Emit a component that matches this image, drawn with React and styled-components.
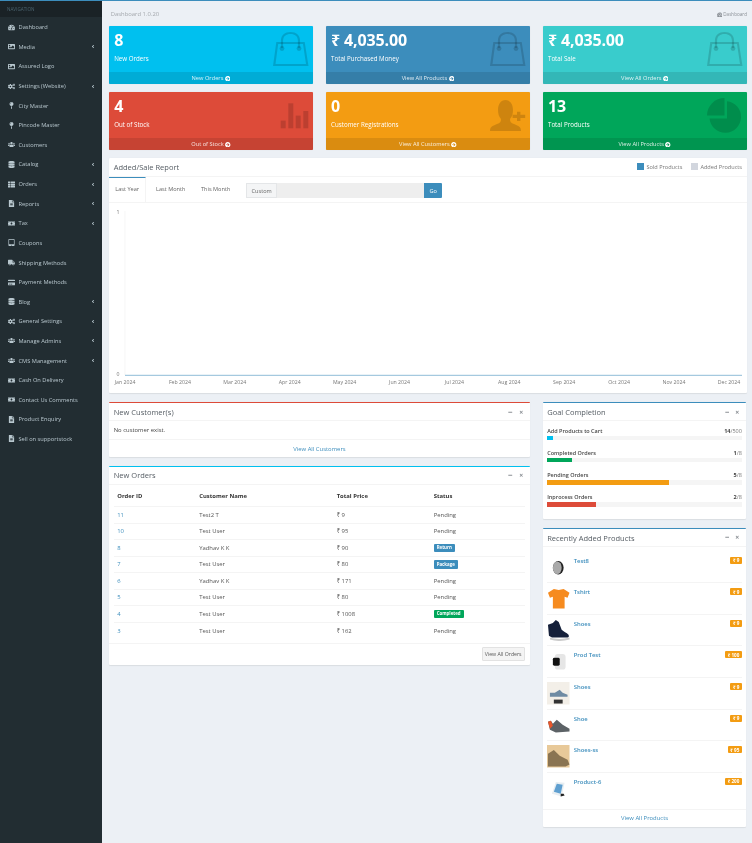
import React from 'react';
import styled, { createGlobalStyle } from 'styled-components';
import {
  FaTachometerAlt, FaImage, FaCogs, FaMapPin, FaUsers, FaDatabase, FaThList, FaFileAlt, FaMoneyBill,
  FaTabletAlt, FaTruck, FaCreditCard, FaAngleLeft, FaArrowCircleRight, FaMinus, FaTimes,
} from 'react-icons/fa';

const Global = createGlobalStyle`
  html, body { margin: 0; padding: 0; background: #ecf0f5; }
  body { font-family: "Open Sans", "Noto Sans", "DejaVu Sans", sans-serif; color: #333; }
  * { box-sizing: border-box; }
`;

const Page = styled.div`
  width: 752px; height: 843px; display: flex; overflow: hidden;
  border-top: 1.5px solid #3c8dbc; background: #ecf0f5; filter: blur(.3px);
`;
const Sidebar = styled.aside`width: 102px; flex: none; background: #222d32;`;
const NavHeader = styled.div`
  height: 16.4px; background: #1a2226; color: #4b646f; font-size: 4.6px;
  padding-left: 7px; display: flex; align-items: center;
`;
const NavItem = styled.div`
  height: 19.62px; display: flex; align-items: center; padding-left: 8px; color: #b8c7ce; font-size: 5.7px;
  svg.main { width: 7px; height: 7px; margin-right: 3.5px; flex: none; }
  svg.arrow { width: 4px; height: 5px; margin-left: auto; margin-right: 7px; }
`;
const Main = styled.main`flex: 1; padding: 0 5px 0 7.2px; min-width: 0;`;
const Head = styled.div`height: 24.8px; display: flex; align-items: center; justify-content: space-between; padding: 2px 0 0 1.5px;`;
const HeadTitle = styled.div`font-size: 5.9px; color: #a4a8ad;`;
const Crumb = styled.div`
  font-size: 4.6px; color: #8b9096; display: flex; align-items: center; gap: 1px;
  svg { width: 5.5px; height: 5.5px; }
`;
const Stats = styled.div`display: grid; grid-template-columns: repeat(3, 203.6px); column-gap: 13.3px; row-gap: 7.5px;`;
const Stat = styled.div`
  height: 58.5px; background: ${p => p.$bg}; color: #fff; position: relative; border-radius: 1px;
  display: flex; flex-direction: column; box-shadow: 0 0 1px rgba(0,0,0,.15);
`;
const StatBody = styled.div`flex: 1; padding: 5.5px 5px 0; min-height: 46px;`;
const StatValue = styled.div`font-size: 16px; font-weight: 700; line-height: 19px; letter-spacing: -.15px;`;
const StatLabel = styled.div`font-size: 6.2px; line-height: 9px; margin-top: 3.5px;`;
const StatIcon = styled.svg`position: absolute; right: 3.7px; top: 6px; width: 36px; height: 36px; fill: rgba(0,0,0,.15); stroke: none;`;
const StatFoot = styled.div`
  height: 12px; flex: none; background: rgba(0,0,0,.1); font-size: 5.7px; color: rgba(255,255,255,.85);
  display: flex; align-items: center; justify-content: center; gap: 1.5px;
  svg { width: 5.5px; height: 5.5px; color: #fff; }
`;
const Box = styled.section`
  background: #fff; border-top: ${p => p.$top ? `1.5px solid ${p.$top}` : '0'};
  box-shadow: 0 .5px 1px rgba(0,0,0,.08); border-radius: 1px; margin-bottom: ${p => p.$mb ?? 8.8}px;
  min-height: ${p => p.$h}px;
`;
const ReportBox = styled(Box)`margin-top: 7.5px; margin-bottom: 0;`;
const BoxHead = styled.div`
  height: ${p => p.$h || 18.2}px; display: flex; align-items: center; justify-content: space-between;
  padding: 0 5px 0 4.5px; border-bottom: .5px solid #f4f4f4;
`;
const BoxTitle = styled.h3`margin: 0; font-size: 7.5px; font-weight: 400; color: #555c63;`;
const Tools = styled.div`
  display: flex; gap: 6px; align-items: center; color: #8a8f94; padding-right: 1.5px;
  svg { width: 4.5px; height: 4.5px; }
`;
const Legend = styled.div`display: flex; align-items: center; font-size: 5.6px; color: #777;`;
const LegendItem = styled.span`
  display: flex; align-items: center; gap: 2.5px; margin-left: ${p => p.$ml || 0}px;
  &::before { content: ""; width: 7px; height: 7px; background: ${p => p.$c}; }
`;
const TabsRow = styled.div`height: 26.5px; display: flex; border-bottom: .5px solid #f4f4f4; position: relative;`;
const Tab = styled.div`
  width: ${p => p.$w}px; height: 100%; padding: 7px 0 0; text-align: center; font-size: 5.6px; color: #666;
  border-top: 1.5px solid ${p => p.$active ? '#3c8dbc' : 'transparent'};
  border-right: ${p => p.$active ? '.5px solid #f4f4f4' : '0'};
`;
const InputGroup = styled.div`display: flex; height: 14.5px; width: 196px; margin: 6.5px 0 0 10px; font-size: 5.6px; color: #666;`;
const Addon = styled.div`width: 31px; background: #f4f5f6; border: .5px solid #e4e6e8; display: flex; align-items: center; justify-content: center;`;
const Fake = styled.div`flex: 1; background: #eee;`;
const Go = styled.div`width: 18px; background: #3c8dbc; color: #fff; display: flex; align-items: center; justify-content: center; border-radius: 0 1px 1px 0;`;
const Chart = styled.svg`display: block; width: 100%; height: 189.5px;`;
const Columns = styled.div`display: grid; grid-template-columns: 420.5px 203.7px; column-gap: 13px; margin-top: 9.5px;`;
const Body = styled.div`padding: ${p => p.$p || '0 4.5px'}; font-size: 5.9px; color: #444;`;
const NoCust = styled(Body)`height: 17.8px; display: flex; align-items: center; padding-left: 4.5px;`;
const FootLink = styled.div`
  height: ${p => p.$h || 17}px; border-top: .5px solid #f4f4f4; display: flex; align-items: center; justify-content: center;
  font-size: 5.9px; color: #3c8dbc;
`;
const Table = styled.table`
  border-collapse: collapse; width: 411px; margin: 1.5px 5px 0; font-size: 5.9px; color: #555;
  th { font-weight: 700; text-align: left; color: #333; height: 20px; padding: 0 0 0 3px; border-bottom: .7px solid #f4f4f4; }
  td { height: 16.5px; padding: 0 0 0 3px; border-bottom: .5px solid #f4f4f4; }
  tr:last-child td { border-bottom: 0; }
`;
const ColId = styled.th`width: 82px;`;
const ColName = styled.th`width: 137.5px;`;
const ColPrice = styled.th`width: 97px;`;
const IdLink = styled.span`color: #3c8dbc;`;
const Status = styled.span`
  display: inline-block; background: ${p => p.$bg}; color: #fff; font-size: 4.4px; font-weight: 700;
  padding: 1.4px 3px; line-height: 5.5px; border-radius: 1px;
`;
const OrdersFoot = styled.div`border-top: .5px solid #f4f4f4; height: 22.3px; margin-top: 4px; display: flex; align-items: center; justify-content: flex-end; padding-right: 5px;`;
const SmallBtn = styled.div`width: 43px; height: 14px; background: #f4f4f4; border: .5px solid #e2e2e2; font-size: 5.2px; color: #555; display: flex; align-items: center; justify-content: center; border-radius: 1px;`;
const Goal = styled.div`margin-bottom: 8.2px;`;
const GoalRow = styled.div`display: flex; justify-content: space-between; font-size: 5.5px; font-weight: 600; color: #444; height: 9px; align-items: center; b { font-weight: 700; } span span { font-weight: 400; color: #777; }`;
const Track = styled.div`height: 4.6px; background: #f5f5f5; margin-top: .4px;`;
const Fill = styled.div`height: 100%; background: ${p => p.$c};`;
const Product = styled.div`
  height: 31.6px; display: flex; border-bottom: .5px solid #f4f4f4; padding-top: 3px;
  &:last-child { border-bottom: 0; }
`;
const Thumb = styled.svg`width: 22.5px; height: 22.5px; flex: none; margin-top: 1px;`;
const ProdName = styled.div`margin-left: 4px; font-size: 5.9px; font-weight: 600; color: #3c8dbc; flex: 1; padding-top: 2px; line-height: 8px;`;
const Price = styled.div`height: 7px; background: #f39c12; color: #fff; font-size: 4.6px; font-weight: 700; padding: 0 2.5px; border-radius: 1px; display: flex; align-items: center; margin-top: 2px;`;

const nav = [
  [FaTachometerAlt, 'Dashboard'], [FaImage, 'Media', 1], [FaImage, 'Assured Logo'], [FaCogs, 'Settings (Website)', 1],
  [FaMapPin, 'City Master'], [FaMapPin, 'Pincode Master'], [FaUsers, 'Customers'], [FaDatabase, 'Catalog', 1],
  [FaThList, 'Orders', 1], [FaFileAlt, 'Reports', 1], [FaMoneyBill, 'Tax', 1], [FaTabletAlt, 'Coupons'],
  [FaTruck, 'Shipping Methods'], [FaCreditCard, 'Payment Methods'], [FaDatabase, 'Blog', 1], [FaCogs, 'General Settings', 1],
  [FaUsers, 'Manage Admins', 1], [FaUsers, 'CMS Management', 1], [FaMoneyBill, 'Cash On Delivery'],
  [FaMoneyBill, 'Contact Us Comments'], [FaFileAlt, 'Product Enquiry'], [FaFileAlt, 'Sell on supportstock'],
];

const Bag = <g><path fillRule="evenodd" d="M3.3 10h28.4L35.5 34H0zM5.2 12 2.5 32h30.5L30 12z"/><path d="M7.9 16V9C7.9 3 12 0 17.5 0s9.6 3 9.6 9v7h-2.2V9c0-5-3-7-7.4-7S10.1 4 10.1 9v7z"/><circle cx="9" cy="16.5" r="2.4"/><circle cx="26" cy="16.5" r="2.4"/></g>;
const Bars = <g><rect x="7.7" y="22.6" width="5" height="7.7"/><rect x="15.3" y="5.3" width="5" height="25"/><rect x="22.7" y="17.6" width="5" height="12.7"/><rect x="30.3" y="13" width="5" height="17.3"/></g>;
const Person = <g><path d="M0 33c0-4 2-5 7-7 3-1 4-2 4-5-2-2-3-5-3-9 0-6 3-10 7.5-10S23 6 23 12c0 4-1 7-3 9 0 3 1 4 4 5 5 2 7 3 7 7z"/><path d="M27 13.7h3.4v3h4.8v3.4h-4.8v3h-3.4v-3h-4.4v-3.4h4.4z"/></g>;
const Pie = <g><path d="M17.5 0v17.5H0A17.5 17.5 0 0 1 17.5 0z"/><path d="M20 3.2A15.8 15.8 0 1 1 2.5 20.5H20z"/></g>;

const stats = [
  ['#00c0ef', '8', 'New Orders', 'New Orders', Bag],
  ['#3c8dbc', '₹ 4,035.00', 'Total Purchased Money', 'View All Products', Bag],
  ['#39cccc', '₹ 4,035.00', 'Total Sale', 'View All Orders', Bag],
  ['#dd4b39', '4', 'Out of Stock', 'Out of Stock', Bars],
  ['#f39c12', '0', 'Customer Registrations', 'View All Customers', Person],
  ['#00a65a', '13', 'Total Products', 'View All Products', Pie],
];

const months = ['Jan', 'Feb', 'Mar', 'Apr', 'May', 'Jun', 'Jul', 'Aug', 'Sep', 'Oct', 'Nov', 'Dec'];

const orders = [
  ['11', 'Test2 T', '₹ 9', 'Pending'], ['10', 'Test User', '₹ 95', 'Pending'],
  ['8', 'Yadhav K K', '₹ 90', 'Return', '#3c8dbc'], ['7', 'Test User', '₹ 80', 'Package', '#3c8dbc'],
  ['6', 'Yadhav K K', '₹ 171', 'Pending'], ['5', 'Test User', '₹ 80', 'Pending'],
  ['4', 'Test User', '₹ 1008', 'Completed', '#00a65a'], ['3', 'Test User', '₹ 162', 'Pending'],
];

const goals = [
  ['Add Products to Cart', '14', '/500', 3.2, '#00c0ef'], ['Completed Orders', '1', '/8', 12.5, '#00a65a'],
  ['Pending Orders', '5', '/8', 62.5, '#f39c12'], ['Inprocess Orders', '2', '/8', 25, '#dd4b39'],
];

const images = [
  <g><ellipse cx="11.5" cy="12" rx="5.5" ry="7" fill="#222"/><ellipse cx="10.5" cy="12" rx="4.5" ry="6.5" fill="#aaa"/></g>,
  <path d="M7 2l5 1 5-1 6 4-2 5-3-1v12H6V10l-3 1-2-5z" fill="#f68b1f"/>,
  <g><path d="M1 6l5-2 3-3 3 2 3 8c2 2 5 3 7 5 1 2 0 3-2 3H5l-3-2z" fill="#15203a"/><path d="M3 19c6 2 13 2 20 0v2c-7 2-14 2-20 0z" fill="#ccc"/></g>,
  <g><rect x="8" y="4" width="11" height="16" rx="3" fill="#e6e6e6"/><rect x="6" y="8" width="7" height="8" rx="1.5" fill="#111"/></g>,
  <g><rect width="23" height="23" fill="#f3efe8"/><path d="M3 11l5 0 5-3 3 3 5 2v2H3z" fill="#6f8ba3"/><rect x="7" y="18" width="9" height="4" fill="#333"/></g>,
  <g><path d="M1 8l3-1 2 3 4-4 6 5 7 4v3l-14 1-6-3z" fill="#5c6266"/><path d="M1 8l3-1 2 5-3 3z" fill="#e8562a"/></g>,
  <g><rect width="23" height="23" fill="#e8c999"/><path d="M1 22V9l6-4 6 6 8 4 2 5-4 2z" fill="#8a7452"/></g>,
  <g><path d="M9 5l9 1-3 14-10-3z" fill="#e8eef2"/><path d="M10 7l6 1-2 9-7-2z" fill="#5f9fd0"/><path d="M14 17l3 0 1 2-4 1z" fill="#222"/></g>,
];
const products = [
  ['Test8', '₹ 9'], ['Tshirt', '₹ 9'], ['Shoes', '₹ 9'], ['Prod Test', '₹ 100'],
  ['Shoes', '₹ 9'], ['Shoe', '₹ 9'], ['Shoes-ss', '₹ 95'], ['Product-6', '₹ 200'],
];

const BoxTools = () => <Tools><FaMinus /><FaTimes /></Tools>;

export default function App() {
  return (
    <>
      <Global />
      <Page>
        <Sidebar>
          <NavHeader>NAVIGATION</NavHeader>
          {nav.map(([I, t, a]) => (
            <NavItem key={t + a}>
              <I className="main" />{t}{a && <FaAngleLeft className="arrow" />}
            </NavItem>
          ))}
        </Sidebar>
        <Main>
          <Head>
            <HeadTitle>Dashboard 1.0.20</HeadTitle>
            <Crumb><FaTachometerAlt />Dashboard</Crumb>
          </Head>
          <Stats>
            {stats.map(([bg, v, l, f, ic], i) => (
              <Stat key={i} $bg={bg}>
                <StatBody>
                  <StatValue>{v}</StatValue>
                  <StatLabel>{l}</StatLabel>
                </StatBody>
                <StatIcon viewBox="0 0 36 36">{ic}</StatIcon>
                <StatFoot>{f}<FaArrowCircleRight /></StatFoot>
              </Stat>
            ))}
          </Stats>
          <ReportBox $h={235}>
            <BoxHead $h={19}>
              <BoxTitle>Added/Sale Report</BoxTitle>
              <Legend>
                <LegendItem $c="#3c8dbc">Sold Products</LegendItem>
                <LegendItem $c="#d2d6de" $ml={8.5}>Added Products</LegendItem>
              </Legend>
            </BoxHead>
            <TabsRow>
              <Tab $w={37} $active>Last Year</Tab>
              <Tab $w={49}>Last Month</Tab>
              <Tab $w={41}>This Month</Tab>
              <InputGroup>
                <Addon>Custom</Addon><Fake /><Go>Go</Go>
              </InputGroup>
            </TabsRow>
            <Chart viewBox="0 0 637.8 189.5">
              <line x1="16" y1="8" x2="16" y2="172" stroke="#f0f0f0" strokeWidth=".6" />
              <text x="10.5" y="10.5" fontSize="5.2" fill="#777" textAnchor="end">1</text>
              <text x="10.5" y="173" fontSize="5.2" fill="#777" textAnchor="end">0</text>
              <line x1="16" y1="172.3" x2="633" y2="172.3" stroke="#8fbcd8" strokeWidth="1" />
              {months.map((m, i) => (
                <text key={m} x={16 + i * 54.9} y="180.5" fontSize="5.2" fill="#777" textAnchor="middle">{m} 2024</text>
              ))}
            </Chart>
          </ReportBox>
          <Columns>
            <div>
              <Box $top="#dd4b39">
                <BoxHead><BoxTitle>New Customer(s)</BoxTitle><BoxTools /></BoxHead>
                <NoCust>No customer exist.</NoCust>
                <FootLink $h={17.8}>View All Customers</FootLink>
              </Box>
              <Box $top="#00c0ef" $mb={0}>
                <BoxHead><BoxTitle>New Orders</BoxTitle><BoxTools /></BoxHead>
                <Table>
                  <thead>
                    <tr><ColId>Order ID</ColId><ColName>Customer Name</ColName><ColPrice>Total Price</ColPrice><th>Status</th></tr>
                  </thead>
                  <tbody>
                    {orders.map(o => (
                      <tr key={o[0]}>
                        <td><IdLink>{o[0]}</IdLink></td><td>{o[1]}</td><td>{o[2]}</td>
                        <td>{o[4] ? <Status $bg={o[4]}>{o[3]}</Status> : o[3]}</td>
                      </tr>
                    ))}
                  </tbody>
                </Table>
                <OrdersFoot><SmallBtn>View All Orders</SmallBtn></OrdersFoot>
              </Box>
            </div>
            <div>
              <Box $top="#3c8dbc" $h={117}>
                <BoxHead><BoxTitle>Goal Completion</BoxTitle><BoxTools /></BoxHead>
                <Body $p="4.7px 4.5px 0">
                  {goals.map(g => (
                    <Goal key={g[0]}>
                      <GoalRow>{g[0]}<span><b>{g[1]}</b><span>{g[2]}</span></span></GoalRow>
                      <Track><Fill $c={g[4]} style={{ width: `${g[3]}%` }} /></Track>
                    </Goal>
                  ))}
                </Body>
              </Box>
              <Box $top="#3c8dbc" $mb={0}>
                <BoxHead><BoxTitle>Recently Added Products</BoxTitle><BoxTools /></BoxHead>
                <Body $p="4.4px 4.5px 4.5px">
                  {products.map((p, i) => (
                    <Product key={i}>
                      <Thumb viewBox="0 0 23 23">{images[i]}</Thumb>
                      <ProdName>{p[0]}</ProdName>
                      <Price>{p[1]}</Price>
                    </Product>
                  ))}
                </Body>
                <FootLink $h={18}>View All Products</FootLink>
              </Box>
            </div>
          </Columns>
        </Main>
      </Page>
    </>
  );
}
